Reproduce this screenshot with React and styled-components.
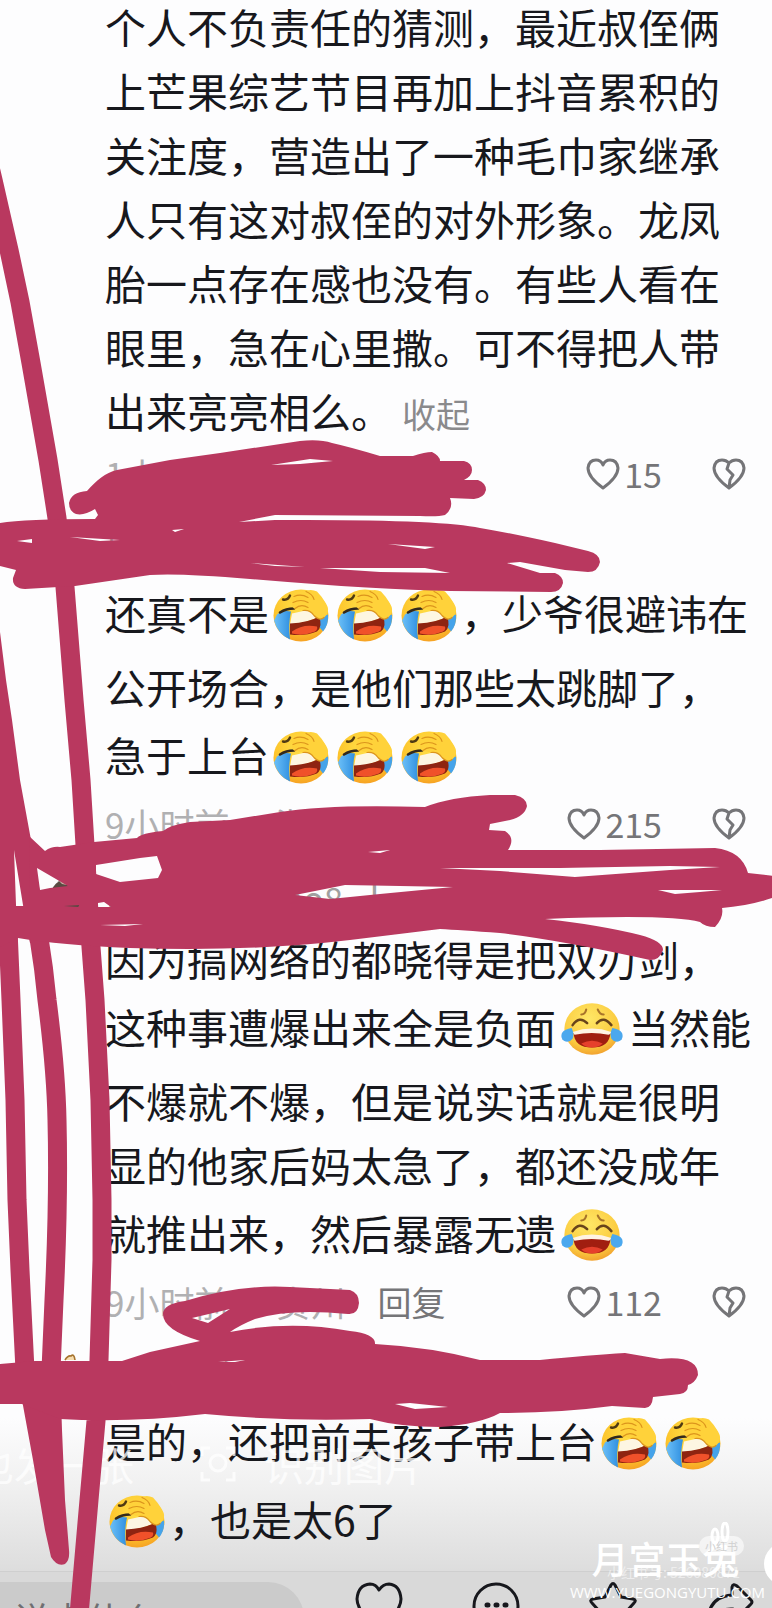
import React, { useState } from "react";
import styled, { createGlobalStyle } from "styled-components";

const INK = "#b9385f";

const comments = [
  {
    id: 1,
    text: "个人不负责任的猜测，最近叔侄俩上芒果综艺节目再加上抖音累积的关注度，营造出了一种毛巾家继承人只有这对叔侄的对外形象。龙凤胎一点存在感也没有。有些人看在眼里，急在心里撒。可不得把人带出来亮亮相么。",
    time: "1小时前",
    likes: 15,
    expanded: true,
  },
  {
    id: 2,
    name: "用户昵称",
    avatar: "plain",
    text: "还真不是[rofl][rofl][rofl]，少爷很避讳在公开场合，是他们那些太跳脚了，急于上台[rofl][rofl][rofl]",
    time: "9小时前",
    place: "浙江",
    likes: 215,
  },
  {
    id: 3,
    name: "用户的昵称 no8 - l",
    avatar: "dark",
    text: "因为搞网络的都晓得是把双刃剑，这种事遭爆出来全是负面[joy]当然能不爆就不爆，但是说实话就是很明显的他家后妈太急了，都还没成年就推出来，然后暴露无遗[joy]",
    time: "9小时前",
    place: "贵州",
    likes: 112,
    reply: true,
  },
  {
    id: 4,
    name: "用户昵称",
    avatar: "ears",
    text: "是的，还把前夫孩子带上台[rofl][rofl][rofl]，也是太6了",
  },
];

function RoflFace() {
  return (
    <Emoji $wide={56} viewBox="0 0 56 53" role="img" aria-label="笑哭捂脸">
      <defs>
        <radialGradient id="roflSkin" cx="0.5" cy="0.3" r="0.75">
          <stop offset="0" stopColor="#ffe14a" />
          <stop offset="0.65" stopColor="#fdc52c" />
          <stop offset="1" stopColor="#f59a22" />
        </radialGradient>
        <linearGradient id="roflTear" x1="0" x2="1" y1="0" y2="0">
          <stop offset="0" stopColor="#6cc0f8" />
          <stop offset="1" stopColor="#2f8fe0" />
        </linearGradient>
      </defs>
      <ellipse cx="28" cy="27" rx="27.5" ry="26" fill="url(#roflSkin)" />
      <path d="M4 26 Q10 21 18 23 Q15 36 17 51 Q5 46 1 32 Z" fill="url(#roflTear)" />
      <path d="M47 29 L55 26 Q56 36 50 43 L46 38 Z" fill="#45a3ea" />
      <path d="M19 25 L37 21 L46 28 Q36 34 17 36 Z" fill="#fdf6e2" />
      <path d="M17 35 Q36 34 46 28 Q50 38 44 43 Q32 48 17 46 Z" fill="#8e2411" />
      <path d="M19 43 Q30 35 44 38 Q45 41 42 43 Q30 48 19 45 Z" fill="#f0512a" />
      <path d="M7 24 Q13 20 21 20" fill="none" stroke="#33291c" strokeWidth="2.6" strokeLinecap="round" />
      <path d="M10 11 Q15 12 17 7" fill="none" stroke="#4f3a13" strokeWidth="2.4" strokeLinecap="round" />
      <path
        d="M20 8 Q24 2 31 3 Q38 0 44 3 Q49 8 53 15 Q58 23 51 29 Q46 33 40 26 Q36 21 30 22 L21 20 Q17 17 20 14 Q17 11 20 8 Z"
        fill="#ffd23a"
      />
      <path
        d="M21 8 Q28 5 35 9 M20 14 Q28 10 35 14 M22 20 Q28 15 35 19 M33 3 Q40 6 41 11 M30 22 Q37 21 41 27 Q47 33 51 29"
        fill="none"
        stroke="#dc951d"
        strokeWidth="1.2"
        strokeLinecap="round"
      />
    </Emoji>
  );
}

function JoyFace() {
  return (
    <Emoji $wide={64} viewBox="0 0 66 54" role="img" aria-label="笑哭">
      <defs>
        <radialGradient id="joySkin" cx="0.45" cy="0.3" r="0.75">
          <stop offset="0" stopColor="#ffe766" />
          <stop offset="0.7" stopColor="#fbcb3f" />
          <stop offset="1" stopColor="#f0992c" />
        </radialGradient>
      </defs>
      <ellipse cx="33" cy="27" rx="28.5" ry="26.5" fill="url(#joySkin)" />
      <path
        d="M22 12 Q26 12 27 7 M45 12 Q41 12 39 7"
        fill="none"
        stroke="#a8742a"
        strokeWidth="2.2"
        strokeLinecap="round"
      />
      <path
        d="M13 23 Q20 13 28 21 M38 21 Q45 13 53 23"
        fill="none"
        stroke="#68441b"
        strokeWidth="2.6"
        strokeLinecap="round"
      />
      <path d="M14 31 Q33 25 52 31 Q51 46 33 46 Q15 46 14 31 Z" fill="#a11e10" />
      <path d="M13 30 Q33 23 53 30 Q52 33 50 33 Q33 29 15 33 Z" fill="#fff3e4" />
      <path d="M22 42 Q33 36 44 42 Q40 46 33 46 Q26 46 22 42 Z" fill="#e6402c" />
      <path d="M12 26 Q15 32 13 37 Q9 42 4 39 Q0 36 2 31 Q5 27 12 26 Z" fill="#4ba8ee" />
      <path d="M54 26 Q51 32 53 37 Q57 42 62 39 Q66 36 64 31 Q61 27 54 26 Z" fill="#4ba8ee" />
    </Emoji>
  );
}

function RichText({ text }) {
  return text.split(/(\[rofl\]|\[joy\])/).map((part, i) => {
    if (part === "[rofl]") return <RoflFace key={i} />;
    if (part === "[joy]") return <JoyFace key={i} />;
    return part;
  });
}

function UserAvatar({ kind }) {
  return (
    <Avatar viewBox="0 0 44 44" aria-hidden="true">
      {kind === "dark" && (
        <>
          <circle cx="22" cy="22" r="20" fill="#5a4942" />
          <path d="M6 0 L24 10 L14 8 Z" fill="#c9b2a6" />
        </>
      )}
      {kind === "ears" && (
        <>
          <circle cx="22" cy="26" r="18" fill="#e8b878" />
          <path d="M17 6 Q20 1 23 2 Q26 -1 27 6" fill="#f6dcae" stroke="#a6742f" strokeWidth="1.6" />
        </>
      )}
    </Avatar>
  );
}

const HeartIcon = () => (
  <SmallIcon viewBox="0 0 34 32" aria-hidden="true">
    <path d="M17 30 Q2 19 2 10 Q3 2 10 2 Q15 2 17 7 Q19 2 24 2 Q31 2 32 10 Q32 19 17 30 Z" />
  </SmallIcon>
);

const BrokenHeartIcon = () => (
  <SmallIcon viewBox="0 0 34 32" aria-hidden="true">
    <path d="M17 30 Q2 19 2 10 Q3 2 10 2 Q14 2 17 5 Q20 2 24 2 Q31 2 32 10 Q32 19 17 30 L18 22 L21 17 L15 11 L17 5" />
  </SmallIcon>
);

function Comment({ data }) {
  const [liked, setLiked] = useState(false);
  return (
    <Article>
      {data.name && <UserAvatar kind={data.avatar} />}
      <Body>
        {data.name && <UserName>{data.name}</UserName>}
        <Text>
          <RichText text={data.text} />
          {data.expanded && <Toggle type="button">收起</Toggle>}
        </Text>
        {data.time && (
          <Meta>
            <Faint>{data.time}</Faint>
            {data.place && <Faint>{data.place}</Faint>}
            {data.reply && <Action type="button">回复</Action>}
            <Votes>
              <Action type="button" aria-pressed={liked} onClick={() => setLiked(!liked)}>
                <HeartIcon />
                {data.likes}
              </Action>
              <Action type="button" aria-label="不喜欢">
                <BrokenHeartIcon />
              </Action>
            </Votes>
          </Meta>
        )}
      </Body>
    </Article>
  );
}

function MarkerStrokes() {
  return (
    <Marker viewBox="0 0 772 1608" aria-hidden="true">
      {/* long stroke running down the left side */}
      <path
        d="M-14 150 L-7 180 L9 250 L20 302 L31 363 L41 420 L48 460 L57 518 L65 587 L74 700 L81 780 L85 845 L91 947 L95 1000 L100 1100 L102 1200 L102 1260 L99 1360 L96 1421 L89 1500 L79 1615"
        fill="none"
        stroke={INK}
        strokeWidth="19"
        strokeLinejoin="round"
      />
      <path d="M0 632 L6 680 L12 720 L20 780 L31 840 L36 870 L49 943 L30 943 L23 905 L14 850 L16 905 L18 947 L0 947 Z" />
      <path
        d="M8 930 L11 1000 L15 1100 L17 1200 L20 1270 L25 1370 M39 938 Q44 968 47 1000 Q56 1070 57 1120 Q59 1200 54 1300 L51 1370"
        fill="none"
        stroke={INK}
        strokeWidth="19"
        strokeLinejoin="round"
      />
      <path d="M22 1400 L33 1460 L45 1530 L51 1557 Q57 1567 65 1564 Q70 1560 69 1550 L65 1500 L62 1430 L61 1400 Z" />

      <path
        fillRule="evenodd"
        d="M87 491 C97 480 105 473 117 470 L170 460 L220 453 L300 441 Q320 439 332 443 Q350 447 380 456 L413 456 Q425 452 432 452 Q440 456 440 461 L464 461 Q472 463 472 470 Q472 476 464 480 L478 480 Q486 483 486 490 Q484 498 474 499 L450 498 Q454 508 445 515 Q438 517 420 516 L275 515 L239 522 L275 520 Q440 519 480 528 Q500 531 555 543 L588 551 Q600 554 600 562 Q598 572 588 572 L565 570 L520 562 L507 563 L540 573 L555 573 Q563 576 563 583 Q561 592 551 592 L450 591 Q380 590 250 579 Q180 573 150 575 L75 586 L25 589 Q12 588 13 578 L16 570 L0 566 L0 523 Q25 519 95 519 L98 515 L95 509 Q84 516 76 514 Q69 511 69 503 Q71 492 87 491 Z
        M17 541 L32 539 L32 543 Z
        M70 537 L120 540 L100 541 Z
        M172 530 L184 529 L175 532 Z
        M271 465 L310 459 L333 461 L300 464 Z
        M388 544 L435 547 L425 549 Z
        M250 563 L305 567 L275 566 Z
        M320 568 L425 568 L450 573 L380 572 Z"
      />

      <path
        fillRule="evenodd"
        d="M29 836 L45 851 Q52 846 60 847 L94 842 L137 838 Q141 833 163 831 Q170 825 190 822 L230 820 L280 812 Q330 804 425 807 Q450 797 490 795 L515 795 Q527 798 527 806 Q525 816 510 820 L490 824 L489 830 L505 831 Q516 838 508 850 L600 850 L715 848 Q742 851 748 873 L775 876 L775 897 Q750 906 722 908 Q724 918 715 927 Q705 927 700 922 Q670 914 545 919 Q600 925 640 935 Q663 941 663 950 Q660 960 650 960 Q560 940 500 933 Q460 930 440 929 L350 940 Q250 952 130 948 Q60 945 18 938 L0 947 L0 906 L30 906 Z
        M37 868 L68 886 L50 888 L40 890 Z
        M96 865 L140 858 L157 856 L162 870 L158 878 L120 882 L96 874 Z
        M98 903 L104 902 L111 907 L98 907 Z
        M64 906 L80 905 L78 907 Z
        M100 925 L143 924 L125 926 Z
        M295 895 L345 885 L400 886 L453 887 L380 894 L330 899 Z
        M368 852 L390 850 L380 853 Z
        M440 868 L560 868 L670 866 L720 867 L670 870 L575 877 L500 871 Z
        M658 890 L722 890 L700 892 L675 894 Z"
      />

      <path
        fillRule="evenodd"
        d="M0 1364 L35 1361 L122 1361 L150 1352 L200 1341 Q163 1330 163 1314 Q163 1304 185 1301 Q240 1284 290 1287 L350 1290 Q359 1293 359 1303 Q358 1315 348 1314 Q290 1308 255 1319 Q240 1325 230 1332 Q290 1320 350 1331 Q376 1334 375 1344 Q430 1347 480 1360 L540 1360 Q590 1355 625 1353 L660 1359 Q698 1355 698 1375 Q695 1383 688 1385 Q688 1393 680 1394 L653 1397 Q652 1408 645 1408 L612 1406 Q560 1413 500 1413 Q480 1424 440 1427 Q400 1427 370 1419 Q290 1422 205 1414 Q130 1423 60 1419 L22 1404 L0 1404 Z
        M192 1318 L230 1309 L208 1323 Z
        M218 1362 L245 1360 L235 1362 Z
        M395 1404 L410 1403 L448 1407 L415 1409 Z"
      />
    </Marker>
  );
}

function Toolbar() {
  return (
    <Bar>
      <CommentBox type="text" placeholder="说点什么..." aria-label="说点什么" />
      <BarButton type="button" aria-label="点赞">
        <BarIcon viewBox="0 0 48 48">
          <path d="M24 46 Q2 30 2 17 Q3 3 15 2 Q21 2 24 8 Q28 2 34 2 Q45 3 46 17 Q46 30 24 46 Z" />
        </BarIcon>
      </BarButton>
      <BarButton type="button" aria-label="评论">
        <BarIcon viewBox="0 0 48 48">
          <circle cx="24" cy="24" r="22" />
          <path d="M15 23 h1 M24 23 h1 M33 23 h1" strokeWidth="5" />
        </BarIcon>
      </BarButton>
      <BarButton type="button" aria-label="收藏">
        <BarIcon viewBox="0 0 48 48">
          <path d="M22 3 Q24 0 26 3 L32 15 L44 17 Q48 18 45 21 L36 31 L38 45 L24 39 L10 45 L12 31 L3 21 Q0 18 4 17 L16 15 Z" />
        </BarIcon>
      </BarButton>
      <BarButton type="button" aria-label="分享">
        <BarIcon viewBox="0 0 48 48">
          <path d="M26 13 L26 5 Q27 1 31 4 L45 18 Q47 20 45 22 L31 36 L27 34 L27 27 Q10 26 2 42 Q1 15 26 13 Z" />
        </BarIcon>
      </BarButton>
    </Bar>
  );
}

export default function App() {
  return (
    <Page>
      <GlobalStyle />
      <main>
        {comments.map((c) => (
          <Comment key={c.id} data={c} />
        ))}
      </main>
      <Toolbar />
      <Ghost>
        <span>也发一张</span>
        <ScanIcon viewBox="0 0 36 36" aria-hidden="true">
          <path d="M2 10 V2 H10 M26 2 H34 V10 M34 26 V34 H26 M10 34 H2 V26" />
          <circle cx="18" cy="17" r="8" />
        </ScanIcon>
        <span>识别图片</span>
      </Ghost>
      <RoundButton type="button" aria-label="更多" />
      <MarkerStrokes />
      <Watermark>
        <AppPill>小红书</AppPill>
        <AccountId>小红书号: 526080871</AccountId>
        <Brand>月宫玉兔</Brand>
        <BunnyEars viewBox="0 0 24 22" aria-hidden="true">
          <ellipse cx="7" cy="14" rx="3" ry="7" />
          <ellipse cx="17" cy="10" rx="3" ry="9" />
        </BunnyEars>
        <Site href="#">WWW.YUEGONGYUTU.COM</Site>
      </Watermark>
    </Page>
  );
}

const GlobalStyle = createGlobalStyle`
  body {
    margin: 0;
    background: #fff;
  }
  button, input {
    font: inherit;
    border: none;
    padding: 0;
    margin: 0;
    background: none;
    color: inherit;
  }
`;

const Page = styled.div`
  position: relative;
  height: 100vh;
  overflow: hidden;
  font-family: "Noto Sans CJK SC", sans-serif;
  color: #17181d;
  background: linear-gradient(to top, #d4d4d4 0, #e0e0e0 50px, #f0f0f0 120px, #fdfdfe 190px);
  main {
    margin-top: -6px;
  }
`;

const Article = styled.article`
  display: grid;
  grid-template-columns: 57px 1fr;
  padding: 0 17px 0 48px;
`;

const Avatar = styled.svg`
  width: 44px;
  height: 44px;
  margin-top: 32px;
`;

const Body = styled.div`
  grid-column: 2;
`;

const UserName = styled.div`
  height: 48px;
  padding-top: 34px;
  font-size: 34px;
  line-height: 40px;
  color: #a0a0a0;
`;

const Text = styled.p`
  margin: 0;
  font-size: 41px;
  line-height: 64px;
`;

const Emoji = styled.svg`
  width: ${(p) => p.$wide}px;
  height: 54px;
  margin: 12px 4px;
  vertical-align: -24px;
`;

const Toggle = styled.button`
  margin-left: 10px;
  font-size: 34px;
  line-height: 64px;
  color: #8a8a8c;
`;

const Meta = styled.div`
  display: flex;
  align-items: center;
  gap: 32px;
  height: 40px;
  margin-top: 8px;
  padding-right: 9px;
  font-size: 34px;
  line-height: 40px;
`;

const Faint = styled.span`
  font-size: 35px;
  color: #b0b0b2;
  & + & {
    margin-left: 14px;
  }
`;

const Votes = styled.div`
  display: flex;
  gap: 50px;
  margin-left: auto;
`;

const Action = styled.button`
  display: flex;
  align-items: center;
  gap: 4px;
  color: #757578;
  cursor: pointer;
`;

const SmallIcon = styled.svg`
  width: 34px;
  height: 32px;
  fill: none;
  stroke: currentColor;
  stroke-width: 3;
  stroke-linejoin: round;
  stroke-linecap: round;
`;

const Marker = styled.svg`
  position: absolute;
  top: 0;
  left: 0;
  width: 100%;
  fill: ${INK};
  pointer-events: none;
`;

const Bar = styled.footer`
  position: absolute;
  left: 0;
  right: 0;
  bottom: 0;
  display: flex;
  align-items: flex-start;
  height: 26px;
  padding-top: 10px;
  overflow: hidden;
  background: #d9d9d9;
  border-top: 1px solid #cfcfcf;
`;

const CommentBox = styled.input`
  box-sizing: border-box;
  flex: 0 0 304px;
  min-width: 0;
  height: 72px;
  padding: 0 0 0 14px;
  margin-right: 16px;
  border-radius: 0 36px 36px 0;
  background: #cbcbcb;
  font-size: 36px;
  &::placeholder {
    color: #6f6f72;
    opacity: 1;
  }
`;

const BarButton = styled.button`
  flex: 0 0 117px;
`;

const BarIcon = styled.svg`
  width: 48px;
  height: 48px;
  fill: none;
  stroke: #17181d;
  stroke-width: 3;
  stroke-linejoin: round;
  stroke-linecap: round;
`;

const Ghost = styled.div`
  position: absolute;
  left: -26px;
  bottom: 116px;
  display: flex;
  align-items: center;
  font-size: 40px;
  line-height: 56px;
  color: rgba(255, 255, 255, 0.75);
`;

const ScanIcon = styled.svg`
  width: 36px;
  height: 36px;
  margin: 0 28px 0 66px;
  fill: none;
  stroke: currentColor;
  stroke-width: 3;
`;

const RoundButton = styled.button`
  position: absolute;
  right: -36px;
  bottom: 22px;
  width: 44px;
  height: 44px;
  border-radius: 50%;
  background: #fff;
`;

const Watermark = styled.aside`
  position: absolute;
  right: 8px;
  bottom: 6px;
  width: 194px;
  display: grid;
  justify-items: center;
  color: #fff;
`;

const Brand = styled.strong`
  padding-right: 4px;
  font-size: 37px;
  font-weight: 500;
  line-height: 48px;
`;

const BunnyEars = styled.svg`
  position: absolute;
  top: -12px;
  right: 32px;
  width: 24px;
  height: 22px;
  fill: none;
  stroke: #fff;
  stroke-width: 3;
`;

const AppPill = styled.span`
  position: absolute;
  top: 2px;
  right: 20px;
  padding: 0 6px;
  border-radius: 10px;
  background: rgba(255, 255, 255, 0.6);
  color: #d0d0d0;
  font-size: 11px;
  line-height: 20px;
`;

const AccountId = styled.span`
  position: absolute;
  right: 24px;
  bottom: 20px;
  white-space: nowrap;
  font-size: 14px;
  line-height: 20px;
  color: rgba(255, 255, 255, 0.55);
`;

const Site = styled.a`
  font-family: "Open Sans", sans-serif;
  font-size: 15px;
  line-height: 20px;
  color: #fff;
  text-decoration: none;
`;
